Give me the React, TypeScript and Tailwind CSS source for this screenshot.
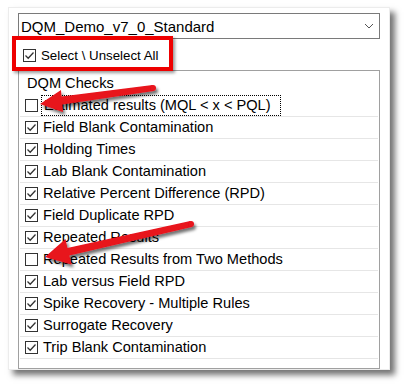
import React from 'react';

const checks = [
  { label: 'Estimated results (MQL < x < PQL)', on: false, focus: true },
  { label: 'Field Blank Contamination', on: true },
  { label: 'Holding Times', on: true },
  { label: 'Lab Blank Contamination', on: true },
  { label: 'Relative Percent Difference (RPD)', on: true },
  { label: 'Field Duplicate RPD', on: true },
  { label: 'Repeated Results', on: true },
  { label: 'Repeated Results from Two Methods', on: false },
  { label: 'Lab versus Field RPD', on: true },
  { label: 'Spike Recovery - Multiple Rules', on: true },
  { label: 'Surrogate Recovery', on: true },
  { label: 'Trip Blank Contamination', on: true },
];

function Box({ on }: { on: boolean }) {
  return (
    <span className="w-[13px] h-[13px] border border-[#333] bg-white flex items-center justify-center shrink-0">
      {on && (
        <svg width="11" height="11" viewBox="0 0 11 11">
          <path d="M1.5 5.5 L4.2 8.2 L9.5 2.5" fill="none" stroke="#333" strokeWidth="1.3" />
        </svg>
      )}
    </span>
  );
}

function Arrow({ points, tail }: { points: string; tail: [number, number] }) {
  return (
    <g filter="url(#sh)">
      <polygon points={points} fill="#e8121b" />
      <circle cx={tail[0]} cy={tail[1]} r="3" fill="#e8121b" />
    </g>
  );
}

export default function App() {
  return (
    <div className="relative w-[406px] h-[386px] bg-white overflow-hidden" style={{ fontFamily: '"Liberation Sans", Arial, sans-serif' }}>
      {/* dialog panel */}
      <div className="absolute left-[8px] top-[7px] w-[382px] h-[363px] bg-white border border-[#ececec] shadow-[5px_5px_6px_rgba(0,0,0,0.55)] flex flex-col px-[9px] pt-[5px]">
        <div className="h-[26px] border border-[#7a7a7a] flex items-center justify-between pl-[2px] pr-[5px]">
          <span className="text-[15px] text-black leading-none">DQM_Demo_v7_0_Standard</span>
          <svg width="10" height="6" viewBox="0 0 10 6">
            <path d="M1 1 L5 5 L9 1" fill="none" stroke="#555" strokeWidth="1" />
          </svg>
        </div>

        <div className="h-[31px] flex items-center gap-[5px] pl-[5px] pt-[2px]">
          <Box on />
          <span className="text-[13.3px] text-black leading-none">Select \ Unselect All</span>
        </div>

        <div className="h-[299px] border border-[#a0a0a0] flex flex-col px-[1px]">
          <div className="h-[24px] pl-[7px] flex items-end text-[14.6px] text-black leading-none pb-[4px]">DQM Checks</div>
          {checks.map((c, i) => (
            <div key={i} className="h-[22px] border-b border-[#e6e6e6] flex items-center pl-[5px] gap-[3px]">
              <Box on={c.on} />
              <span
                className={
                  'text-[14.6px] text-black leading-none h-[21px] flex items-center pl-[2px] ' +
                  (c.focus ? 'border border-dotted border-black w-[240px]' : '')
                }
              >
                {c.label}
              </span>
            </div>
          ))}
        </div>
      </div>

      {/* callout box */}
      <div className="absolute left-[12px] top-[36px] w-[161px] h-[35px] border-4 border-[#ee0000] shadow-[2px_2px_3px_rgba(0,0,0,0.4)]" />

      {/* arrows */}
      <svg className="absolute left-0 top-0" width="406" height="386" viewBox="0 0 406 386">
        <defs>
          <filter id="sh" x="-20%" y="-50%" width="140%" height="200%">
            <feDropShadow dx="2" dy="3" stdDeviation="1.6" floodColor="#000" floodOpacity="0.55" />
          </filter>
        </defs>
        <Arrow points="40,104 61,90 61.5,96.5 152.6,85 153.4,91 62,104.5 63,112" tail={[153, 88]} />
        <Arrow points="45,257 65.5,239 67.4,247.9 190.3,221 191.7,227 69.3,255.6 71.5,264.5" tail={[191, 224]} />
      </svg>
    </div>
  );
}
